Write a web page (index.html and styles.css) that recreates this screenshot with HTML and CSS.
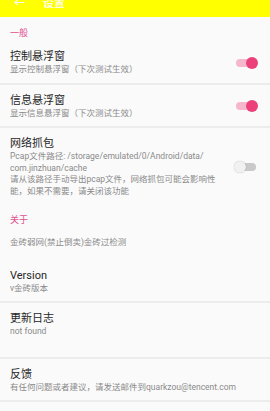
FILE: index.html
```html
<!DOCTYPE html>
<html lang="zh-CN">
<head>
    <meta charset="UTF-8">
    <meta name="viewport" content="width=device-width, initial-scale=1.0">
    <title>设置</title>
    <link rel="stylesheet" href="styles.css">
</head>
<body>
    <div class="app-bar">
        <div class="app-bar-inner">
            <span class="back-btn">←</span>
            <span class="app-title">设置</span>
        </div>
    </div>

    <div class="settings">
        <div class="category">一般</div>

        <div class="pref">
            <div class="pref-text">
                <div class="pref-title">控制悬浮窗</div>
                <div class="pref-summary">显示控制悬浮窗（下次测试生效）</div>
            </div>
            <span class="switch on"></span>
        </div>
        <div class="divider"></div>

        <div class="pref">
            <div class="pref-text">
                <div class="pref-title">信息悬浮窗</div>
                <div class="pref-summary">显示信息悬浮窗（下次测试生效）</div>
            </div>
            <span class="switch on"></span>
        </div>
        <div class="divider"></div>

        <div class="pref">
            <div class="pref-text">
                <div class="pref-title">网络抓包</div>
                <div class="pref-summary">Pcap文件路径: /storage/emulated/0/Android/data/<br>com.jinzhuan/cache<br>请从该路径手动导出pcap文件，网络抓包可能会影响性能，如果不需要，请关闭该功能</div>
            </div>
            <span class="switch"></span>
        </div>

        <div class="category">关于</div>

        <div class="pref pref-plain">
            <div class="pref-text">
                <div class="pref-summary">金砖弱网(禁止倒卖)金砖过检测</div>
            </div>
        </div>

        <div class="pref">
            <div class="pref-text">
                <div class="pref-title">Version</div>
                <div class="pref-summary">v金砖版本</div>
            </div>
        </div>
        <div class="divider"></div>

        <div class="pref pref-tall">
            <div class="pref-text">
                <div class="pref-title">更新日志</div>
                <div class="pref-summary">not found</div>
            </div>
        </div>
        <div class="divider"></div>

        <div class="pref">
            <div class="pref-text">
                <div class="pref-title">反馈</div>
                <div class="pref-summary">有任何问题或者建议，请发送邮件到quarkzou@tencent.com</div>
            </div>
        </div>
        <div class="divider"></div>

        <div class="pref">
            <div class="pref-text">
                <div class="pref-title faded">开源许可</div>
            </div>
        </div>
    </div>
</body>
</html>
```

FILE: styles.css
```css
* {
    margin: 0;
    padding: 0;
    box-sizing: border-box;
}

body {
    font-family: Roboto, "Noto Sans CJK SC", sans-serif;
    background: #fafafa;
    color: #2b2b2b;
    height: 411px;
    overflow: hidden;
}

.app-bar {
    height: 17px;
    background: #ffff00;
    overflow: hidden;
}

.app-bar-inner {
    display: flex;
    align-items: center;
    height: 12px;
    margin-top: -4px;
    padding-left: 14px;
    color: #ffffff;
    font-size: 11px;
    font-weight: 500;
}

.back-btn {
    width: 29px;
    font-size: 11px;
}

.category {
    padding: 10px 10px 2px;
    height: 24px;
    line-height: 12px;
    font-size: 9px;
    color: #e0508e;
}

.pref {
    display: flex;
    align-items: center;
    padding: 9px 12px 7px 10px;
}

.pref-plain {
    padding-bottom: 11px;
}

.pref-tall {
    padding-bottom: 19px;
}

.pref-text {
    flex: 1;
    min-width: 0;
}

.pref-title {
    font-size: 11px;
    line-height: 14px;
    color: #262626;
}

.pref-title.faded {
    color: #e2e2e2;
}

.pref-summary {
    font-size: 8.5px;
    line-height: 11.5px;
    color: #8a8a8a;
}

.divider {
    height: 2px;
    background: #ececec;
}

.switch {
    position: relative;
    flex: none;
    width: 20px;
    height: 8px;
    margin: 0 2px 0 20px;
    border-radius: 4px;
    background: #c9c9c9;
}

.switch::after {
    content: "";
    position: absolute;
    top: -2px;
    left: -2px;
    width: 12px;
    height: 12px;
    border-radius: 50%;
    background: #f1f1f1;
    box-shadow: 0 0 1px rgba(0, 0, 0, 0.35);
}

.switch.on {
    background: #f6b7cc;
}

.switch.on::after {
    left: 10px;
    background: #ec407a;
    box-shadow: none;
}
```
